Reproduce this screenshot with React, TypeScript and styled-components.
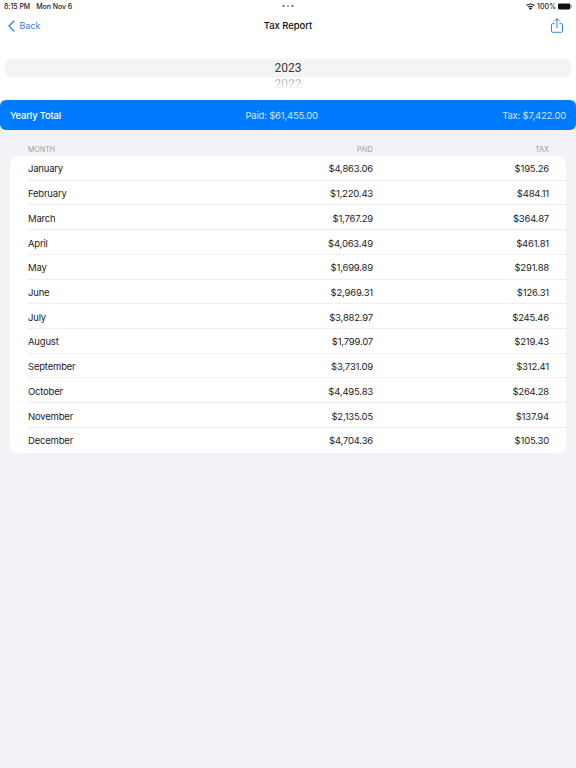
import styled, { createGlobalStyle } from 'styled-components';

const rows = [
  ['January', '$4,863.06', '$195.26'],
  ['February', '$1,220.43', '$484.11'],
  ['March', '$1,767.29', '$364.87'],
  ['April', '$4,063.49', '$461.81'],
  ['May', '$1,699.89', '$291.88'],
  ['June', '$2,969.31', '$126.31'],
  ['July', '$3,882.97', '$245.46'],
  ['August', '$1,799.07', '$219.43'],
  ['September', '$3,731.09', '$312.41'],
  ['October', '$4,495.83', '$264.28'],
  ['November', '$2,135.05', '$137.94'],
  ['December', '$4,704.36', '$105.30'],
];

const Global = createGlobalStyle`
  html, body { margin: 0; padding: 0; }
  body { background: #f2f2f7; font-family: Inter, "Liberation Sans", sans-serif; }
`;

const Page = styled.div`
  width: 576px;
  height: 768px;
  overflow: hidden;
  background: #f2f2f7;
  color: #1c1c1e;
`;

const Header = styled.header`
  background: #fff;
  height: 100px;
  display: flex;
  flex-direction: column;
`;

const StatusBar = styled.div`
  height: 12px;
  padding: 0 4px;
  display: grid;
  grid-template-columns: 1fr auto 1fr;
  align-items: center;
  font-size: 7px;
  font-weight: 500;
  color: #222;
`;

const StatusLeft = styled.div`
  display: flex;
  gap: 6px;
  letter-spacing: -0.05px;
`;

const Dots = styled.div`
  display: flex;
  gap: 2px;
`;

const Dot = styled.span`
  width: 2.4px;
  height: 2.4px;
  border-radius: 50%;
  background: #8e8e93;
`;

const StatusRight = styled.div`
  display: flex;
  justify-content: flex-end;
  align-items: center;
  gap: 2px;
`;

const NavBar = styled.nav`
  height: 27px;
  padding: 0 13px;
  display: grid;
  grid-template-columns: 1fr auto 1fr;
  align-items: center;
`;

const BackLink = styled.div`
  display: flex;
  align-items: center;
  gap: 4.5px;
  margin-left: -5px;
  color: #2f86e8;
  font-size: 9px;
  letter-spacing: -0.05px;
`;

const Title = styled.div`
  font-size: 9.5px;
  font-weight: 500;
  letter-spacing: -0.05px;
  color: #111;
`;

const ShareSlot = styled.div`
  display: flex;
  justify-content: flex-end;
`;

const Picker = styled.div`
  margin: 20px 5px 0;
  display: flex;
  flex-direction: column;
  align-items: center;
  font-family: Roboto, "Liberation Sans", sans-serif;
  font-size: 12px;
`;

const PickerBand = styled.div`
  align-self: stretch;
  height: 18px;
  border-radius: 6px;
  background: #f4f4f5;
  display: flex;
  justify-content: center;
  align-items: center;
  color: #3a3a3c;
`;

const PickerNext = styled.div`
  margin-top: 1px;
  line-height: 12px;
  color: #b8b8bc;
  -webkit-mask-image: linear-gradient(to bottom, #000 35%, transparent 90%);
  mask-image: linear-gradient(to bottom, #000 35%, transparent 90%);
`;

const TotalBar = styled.div`
  height: 30px;
  border-radius: 6px;
  background: #007aff;
  color: #fff;
  padding: 0 10px;
  display: flex;
  justify-content: space-between;
  align-items: center;
  font-size: 9.5px;
  letter-spacing: -0.2px;
`;

const TotalLabel = styled.div`
  font-weight: 500;
  color: #fff;
`;

const TotalValue = styled.div`
  color: #d2e6ff;
`;

const Content = styled.main`
  padding: 0 10px;
`;

const Columns = styled.div`
  display: grid;
  grid-template-columns: 1fr 130px 176px;
  padding: 0 17px 0 18px;
  align-items: center;
`;

const HeadRow = styled(Columns)`
  box-sizing: border-box;
  height: 26px;
  padding-top: 14px;
  font-size: 7px;
  line-height: 8px;
  letter-spacing: 0.1px;
  color: #9a9a9f;
`;

const Card = styled.div`
  background: #fff;
  border-radius: 8px;
  overflow: hidden;
`;

const Row = styled(Columns)<{ $last?: boolean }>`
  height: 24.72px;
  padding-top: 1px;
  box-sizing: border-box;
  font-size: 9.5px;
  letter-spacing: -0.2px;
  color: #1c1c1e;
  position: relative;
  &::after {
    content: '';
    display: ${(p) => (p.$last ? 'none' : 'block')};
    position: absolute;
    left: 18px;
    right: 0;
    bottom: 0;
    height: 1px;
    background: #eeeeef;
  }
`;

const Num = styled.div`
  text-align: right;
`;

export default function App() {
  return (
    <Page>
      <Global />
      <Header>
        <StatusBar>
          <StatusLeft>
            <span>8:15 PM</span>
            <span>Mon Nov 6</span>
          </StatusLeft>
          <Dots>
            <Dot />
            <Dot />
            <Dot />
          </Dots>
          <StatusRight>
            <svg width="9" height="7" viewBox="0 0 18 14">
              <path d="M9 14 L6 10.4 A4.6 4.6 0 0 1 12 10.4 Z" fill="#111" />
              <path d="M4.3 8.4 A7.4 7.4 0 0 1 13.7 8.4" fill="none" stroke="#111" strokeWidth="2.2" />
              <path d="M1.4 5 A11.6 11.6 0 0 1 16.6 5" fill="none" stroke="#111" strokeWidth="2.2" />
            </svg>
            <span>100%</span>
            <svg width="14" height="7" viewBox="0 0 14 7">
              <rect x="0" y="0.5" width="12.4" height="6" rx="1.4" fill="#111" />
              <rect x="12.8" y="2.3" width="1" height="2.4" rx="0.5" fill="#888" />
            </svg>
          </StatusRight>
        </StatusBar>
        <NavBar>
          <BackLink>
            <svg width="7" height="12" viewBox="0 0 7 12">
              <path d="M6 1 L1 6 L6 11" fill="none" stroke="#2f86e8" strokeWidth="1.4" strokeLinecap="round" strokeLinejoin="round" />
            </svg>
            <span>Back</span>
          </BackLink>
          <Title>Tax Report</Title>
          <ShareSlot>
            <svg width="12" height="15" viewBox="0 0 12 15">
              <path d="M3.6 5.6 H1.7 A1.2 1.2 0 0 0 0.5 6.8 V13.1 A1.2 1.2 0 0 0 1.7 14.3 H10.3 A1.2 1.2 0 0 0 11.5 13.1 V6.8 A1.2 1.2 0 0 0 10.3 5.6 H8.4" fill="none" stroke="#2f86e8" strokeWidth="1" />
              <path d="M6 9.6 V0.8 M3.5 3.1 L6 0.6 L8.5 3.1" fill="none" stroke="#2f86e8" strokeWidth="1" strokeLinecap="round" strokeLinejoin="round" />
            </svg>
          </ShareSlot>
        </NavBar>
        <Picker>
          <PickerBand>2023</PickerBand>
          <PickerNext>2022</PickerNext>
        </Picker>
      </Header>
      <TotalBar>
        <TotalLabel>Yearly Total</TotalLabel>
        <TotalValue>Paid: $61,455.00</TotalValue>
        <TotalValue>Tax: $7,422.00</TotalValue>
      </TotalBar>
      <Content>
        <HeadRow>
          <div>MONTH</div>
          <Num>PAID</Num>
          <Num>TAX</Num>
        </HeadRow>
        <Card>
          {rows.map((r, i) => (
            <Row key={r[0]} $last={i === rows.length - 1}>
              <div>{r[0]}</div>
              <Num>{r[1]}</Num>
              <Num>{r[2]}</Num>
            </Row>
          ))}
        </Card>
      </Content>
    </Page>
  );
}
